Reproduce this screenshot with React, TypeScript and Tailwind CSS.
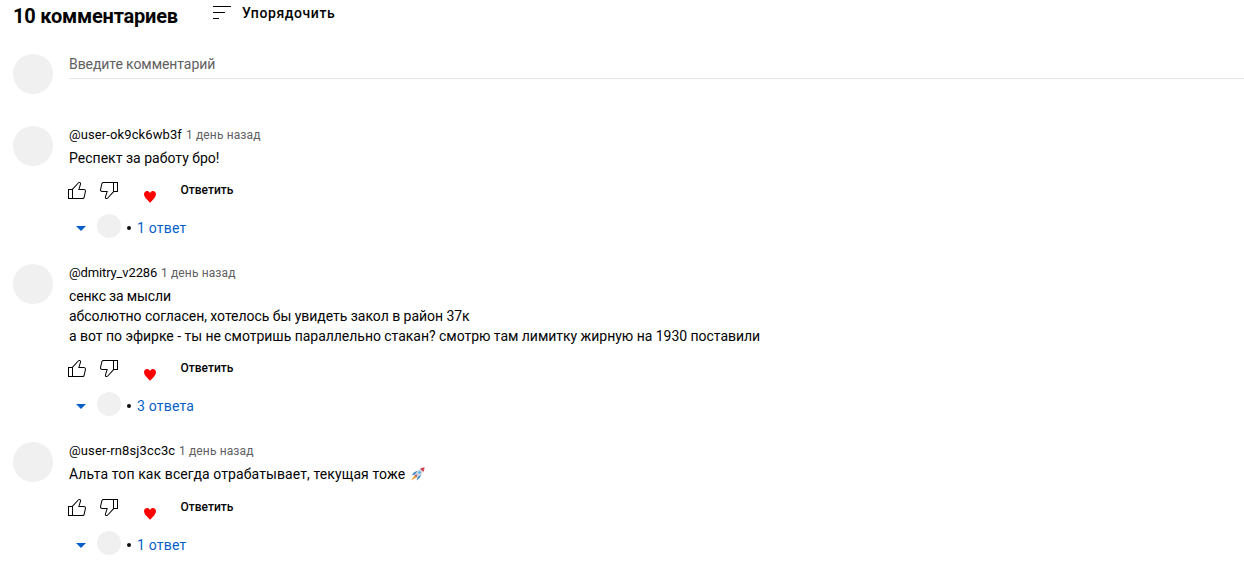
interface Comment {
  id: string;
  author: string;
  authorClass: string;
  time: string;
  lines: { text: string; className: string }[];
  rocket?: boolean;
  replies: string;
}

const COMMENTS: Comment[] = [
  {
    id: 'c1',
    author: '@user-ok9ck6wb3f',
    authorClass: 'w-[113px] tracking-[0.1px]',
    time: '1 день назад',
    lines: [{ text: 'Респект за работу бро!', className: 'tracking-[0.02px]' }],
    replies: '1 ответ',
  },
  {
    id: 'c2',
    author: '@dmitry_v2286',
    authorClass: 'w-[88px] tracking-[-0.13px]',
    time: '1 день назад',
    lines: [
      { text: 'сенкс за мысли', className: 'tracking-[-0.16px]' },
      {
        text: 'абсолютно согласен, хотелось бы увидеть закол в район 37к',
        className: 'tracking-[-0.035px]',
      },
      {
        text: 'а вот по эфирке - ты не смотришь параллельно стакан? смотрю там лимитку жирную на 1930 поставили',
        className: 'tracking-[-0.03px]',
      },
    ],
    replies: '3 ответа',
  },
  {
    id: 'c3',
    author: '@user-rn8sj3cc3c',
    authorClass: 'w-[106px] tracking-[0.13px]',
    time: '1 день назад',
    lines: [
      {
        text: 'Альта топ как всегда отрабатывает, текущая тоже',
        className: 'tracking-[0.1px]',
      },
    ],
    rocket: true,
    replies: '1 ответ',
  },
];

const ICONS = {
  sort: 'M21,6H3V5h18V6z M15,11H3v1h12V11z M9,17H3v1h6V17z',
  like: 'M18.77,11h-4.23l1.52-4.94C16.38,5.03,15.54,4,14.38,4c-0.58,0-1.14,0.24-1.52,0.65L7,11H3v10h4h1h9.43c1.06,0,1.98-0.67,2.19-1.61l1.34-6C21.23,12.15,20.18,11,18.77,11z M7,20H4v-8h3V20z M19.98,13.17l-1.34,6C18.54,19.65,18.03,20,17.43,20H8v-8.61l5.6-6.06C13.79,5.12,14.08,5,14.38,5c0.26,0,0.5,0.11,0.63,0.3c0.07,0.1,0.15,0.26,0.09,0.47l-1.52,4.94L13.18,12h1.35h4.23c0.41,0,0.8,0.17,1.03,0.46C19.92,12.61,20.05,12.86,19.98,13.17z',
  dislike:
    'M17,4h-1H6.57C5.5,4,4.59,4.67,4.38,5.61l-1.34,6C2.77,12.85,3.82,14,5.23,14h4.23l-1.52,4.94C7.62,19.97,8.46,21,9.62,21c0.58,0,1.14-0.24,1.52-0.65L17,14h4V4H17z M10.4,19.67C10.21,19.88,9.92,20,9.62,20c-0.26,0-0.5-0.11-0.63-0.3c-0.07-0.1-0.15-0.26-0.09-0.47l1.52-4.94l0.4-1.29H9.46H5.23c-0.41,0-0.8-0.17-1.03-0.46c-0.12-0.15-0.25-0.4-0.18-0.72l1.34-6C5.46,5.35,5.97,5,6.57,5H16v8.61L10.4,19.67z M20,13h-3V5h3V13z',
  heart:
    'M16.5,3C19.02,3,21,5.19,21,7.99c0,3.7-3.28,6.94-8.25,11.86L12,20.59l-0.74-0.73l-0.04-0.04C6.27,14.92,3,11.69,3,7.99C3,5.19,4.98,3,7.5,3c1.4,0,2.79,0.71,3.71,1.89L12,5.9l0.79-1.01C13.71,3.71,15.1,3,16.5,3z',
  caret: 'M7 10l5 5 5-5z',
};

function Icon({ name, className }: { name: keyof typeof ICONS; className: string }) {
  return (
    <svg viewBox="0 0 24 24" className={`shrink-0 fill-current ${className}`}>
      <path d={ICONS[name]} />
    </svg>
  );
}

function Rocket() {
  return (
    <svg viewBox="0 0 16 16" className="mt-[2px] ml-[5px] size-4 shrink-0">
      <path d="M4 6.5 7.5 4.5 6.5 8 1.5 9.5z" fill="#3b88c3" />
      <path d="M9.5 12 11.5 8.5 8 10 6.5 14.5z" fill="#3b88c3" />
      <path d="M4.5 9.5 1 14.5 6.5 11.5z" fill="#f4a03a" />
      <path d="M14.5 1.5C10 2 6.5 5 4.5 9.5l2 2C11 9.5 14 6 14.5 1.5z" fill="#ccd6dd" />
      <path d="M14.5 1.5c-1.5.1-3 .5-4.300 1.200l3.100 3.100c.7-1 1.100-2.800 1.200-4.300z" fill="#dd3b4c" />
      <path d="M4.5 9.5 7 8.5 6.500 11.500z" fill="#c0394a" />
      <circle cx="9.500" cy="6.500" r="1.200" fill="#55acee" />
    </svg>
  );
}

function CommentItem({ comment }: { comment: Comment }) {
  return (
    <article className="flex gap-4">
      <div className="size-10 shrink-0 rounded-full bg-[#f0f0f0]" />
      <div className="min-w-0 flex-1">
        <div className="flex h-[18px] items-center gap-1 whitespace-nowrap">
          <span className={`text-[13px] ${comment.authorClass}`}>{comment.author}</span>
          <span className="text-xs tracking-[0.13px] text-[#606060]">{comment.time}</span>
        </div>
        <div className="mt-1 text-sm leading-5">
          {comment.lines.map((line) => (
            <div key={line.text} className="flex h-5 whitespace-nowrap">
              <span className={line.className}>{line.text}</span>
              {comment.rocket ? <Rocket /> : null}
            </div>
          ))}
        </div>
        <div className={`-ml-1 flex h-8 items-center ${comment.rocket ? 'mt-[7px]' : 'mt-[6px]'}`}>
          <Icon name="like" className="size-6" />
          <Icon name="dislike" className="ml-2 size-6" />
          <Icon name="heart" className="mt-[13px] ml-[21px] size-4 text-[#f00]" />
          <span className="ml-[22.5px] text-xs font-medium">Ответить</span>
        </div>
        <div className="mt-[2px] flex h-9 items-center text-sm text-[#065fc8]">
          <Icon name="caret" className="mt-1 size-6" />
          <span className="mb-px ml-1 size-6 rounded-full bg-[#f0f0f0]" />
          <span className="mt-1 ml-[6px] size-1 rounded-full bg-[#0f0f0f]" />
          <span className="mt-1 ml-[6px] tracking-[0.2px]">{comment.replies}</span>
        </div>
      </div>
    </article>
  );
}

export default function App() {
  return (
    <main className="h-[568px] overflow-hidden bg-white pl-[13px] font-[Roboto,sans-serif] text-[#030303]">
      <header className="flex h-[54px] items-start">
        <h2 className="mt-[2px] w-[197px] text-xl leading-7 font-bold tracking-[-0.2px] whitespace-nowrap">
          10 комментариев
        </h2>
        <Icon name="sort" className="mt-px size-6" />
        <span className="mt-[3px] ml-2 text-sm leading-5 font-medium tracking-[0.6px]">Упорядочить</span>
      </header>
      <div className="flex h-[72px] gap-4">
        <div className="size-10 shrink-0 rounded-full bg-[#f0f0f0]" />
        <div className="h-[25px] flex-1 border-b border-[#e5e5e5] text-sm leading-5 tracking-[-0.08px] text-[#606060]">
          Введите комментарий
        </div>
      </div>
      <div className="flex flex-col gap-5">
        {COMMENTS.map((comment) => (
          <CommentItem key={comment.id} comment={comment} />
        ))}
      </div>
    </main>
  );
}
